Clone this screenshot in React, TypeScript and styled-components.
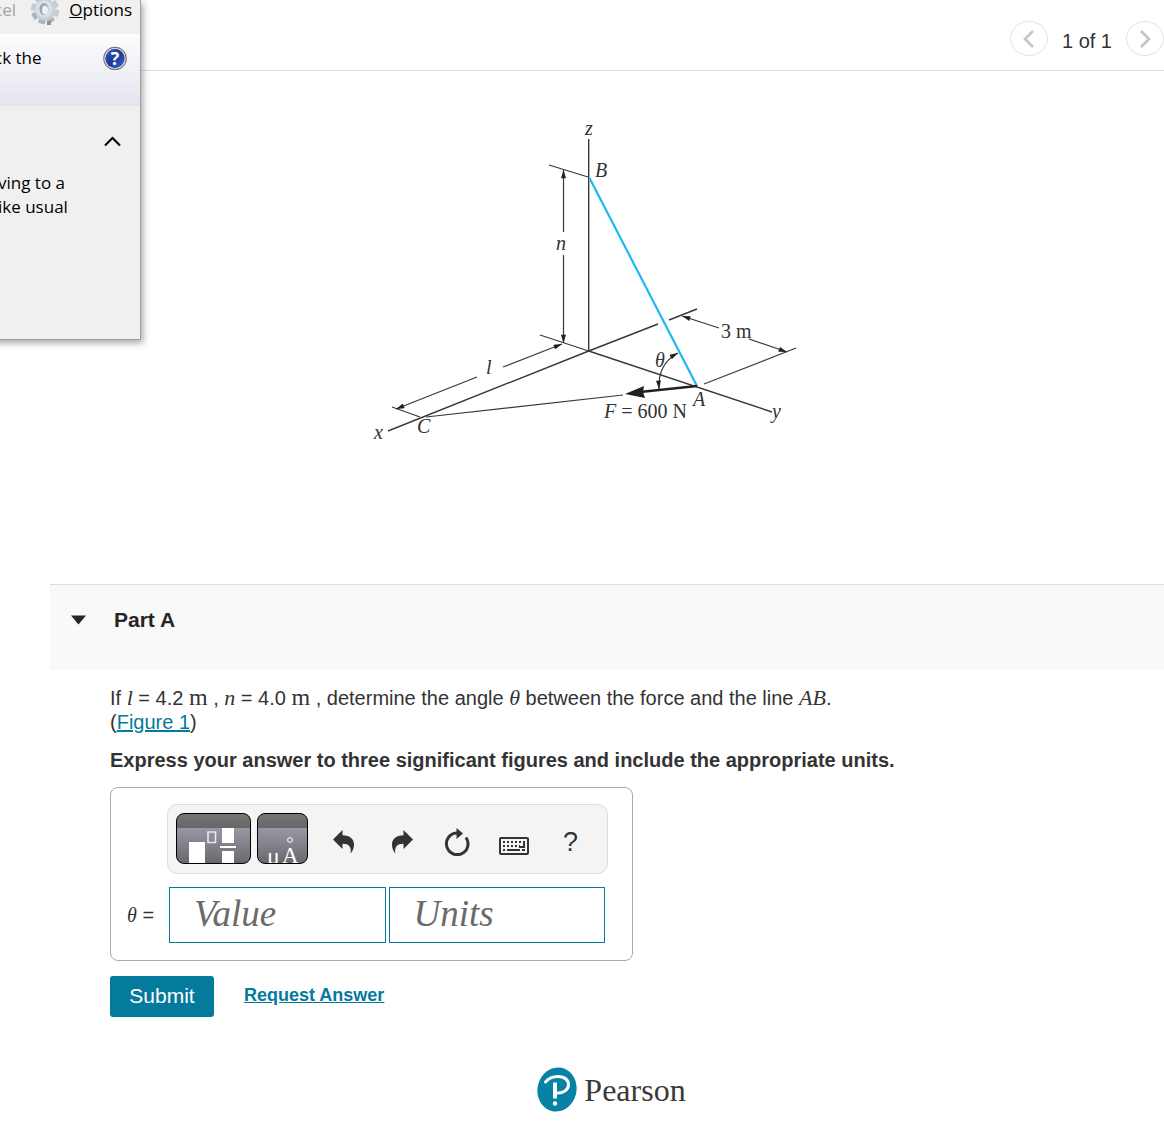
import React from 'react';
import styled, { createGlobalStyle } from 'styled-components';

const sans = '"Liberation Sans", Arial, sans-serif';
const serif = '"Liberation Serif", "Times New Roman", serif';
const teal = '#047a9c';

const GlobalStyle = createGlobalStyle`
  *, *::before, *::after { box-sizing: border-box; }
  body {
    margin: 0;
    background: #fff;
    color: #333;
    font: 20px/24px ${sans};
  }
`;

const Page = styled.div`
  position: relative;
  overflow: hidden;
`;

/* Desktop window lying over the page corner */
const Dialog = styled.aside`
  position: absolute;
  top: 0;
  left: -8px;
  width: 149px;
  height: 340px;
  background: #f0f0f0;
  border: 1px solid #a0a0a0;
  border-top: 0;
  box-shadow: 2px 3px 7px rgba(0, 0, 0, 0.35);
  color: #000;
  font: 17px/24px "Open Sans", "Noto Sans", sans-serif;
`;

const DialogBar = styled.div`
  display: flex;
  align-items: flex-start;
  justify-content: space-between;
  height: 34px;
  padding: 0 8px 0 1px;
  line-height: 20px;
`;

const Disabled = styled.span`
  color: #a3a3a3;
`;

const OptionsButton = styled.button`
  display: flex;
  gap: 8px;
  padding: 0;
  border: 0;
  background: none;
  color: inherit;
  font: inherit;
  line-height: 20px;
`;

const DialogBanner = styled.div`
  display: flex;
  align-items: flex-start;
  justify-content: space-between;
  height: 72px;
  padding: 12px 13px 0 1px;
  background: linear-gradient(#fdfdfe, #e4e4f0);
`;

const IconButton = styled.button`
  display: block;
  padding: 0;
  border: 0;
  background: none;

  svg { display: block; }
`;

const DialogBody = styled.div`
  display: flex;
  flex-direction: column;
  gap: 24px;
  padding: 30px 19px 0 5px;

  p { margin: 0; white-space: nowrap; }
  ${IconButton} { align-self: flex-end; }
`;

const Header = styled.header`
  display: flex;
  justify-content: flex-end;
  height: 71px;
  padding-top: 21px;
  border-bottom: 1px solid #ddd;
`;

const Pager = styled.nav`
  display: flex;
  align-items: flex-start;
  gap: 14px;
  line-height: 40px;
`;

const PageButton = styled.button`
  display: flex;
  align-items: center;
  justify-content: center;
  width: 38px;
  height: 35px;
  padding: 0;
  border: 1px solid #e4e4e4;
  border-radius: 50%;
  background: #fff;
`;

const Figure = styled.figure`
  display: flex;
  justify-content: center;
  min-height: 513px;
  margin: 0;
  padding-top: 39px;

  svg { display: block; }
`;

const Part = styled.section`
  margin-left: 50px;
`;

const PartHeader = styled.div`
  height: 86px;
  padding: 22px 20px;
  border-top: 1px solid #ddd;
  background: #f9f9f9;
`;

const PartToggle = styled.button`
  display: flex;
  align-items: center;
  gap: 27px;
  padding: 0;
  border: 0;
  background: none;
  color: #252525;
  font: bold 21px/26px ${sans};
`;

const PartBody = styled.div`
  padding: 16px 60px 0;
`;

const Question = styled.p`
  margin: 0 0 14px;
`;

const Link = styled.a<{ $strong?: boolean }>`
  color: ${teal};
  font-weight: ${(p) => (p.$strong ? 'bold' : 'normal')};
  font-size: ${(p) => (p.$strong ? '18px' : 'inherit')};
`;

const Instructions = styled.p`
  margin: 0 0 15px;
  font-weight: bold;
`;

const MathText = styled.span<{ $upright?: boolean }>`
  font-family: ${serif};
  font-size: ${(p) => (p.$upright ? 24 : 22)}px;
  line-height: 20px;
  font-style: ${(p) => (p.$upright ? 'normal' : 'italic')};
`;

const AnswerBox = styled.form`
  max-width: 523px;
  height: 174px;
  padding: 16px 24px 0 16px;
  border: 1px solid #aaa;
  border-radius: 8px;
`;

const Toolbar = styled.div`
  display: flex;
  align-items: flex-start;
  margin-left: 40px;
  height: 70px;
  padding: 8px;
  border: 1px solid #ddd;
  border-radius: 10px;
  background: #f4f4f4;
`;

const TemplateButton = styled.button<{ $width: number }>`
  flex: none;
  width: ${(p) => p.$width}px;
  height: 51px;
  margin-right: 6px;
  padding: 0;
  border: 1px solid #000;
  border-radius: 8px;
  overflow: hidden;
  background: linear-gradient(#777 0, #666 14px, #9a97a5 14px, #69696c 100%);

  svg { display: block; }
`;

const ToolButton = styled.button`
  display: flex;
  flex: 1;
  align-items: center;
  justify-content: center;
  height: 58px;
  padding: 0;
  border: 0;
  background: none;
  color: #333;
  font: 27px/32px ${sans};
`;

const AnswerRow = styled.div`
  display: flex;
  align-items: center;
  gap: 3px;
  margin-top: 13px;
  padding-right: 3px;
`;

const AnswerLabel = styled.label`
  flex: none;
  width: 39px;
  font: 20px/24px ${sans};

  em { font-family: ${serif}; }
`;

const AnswerInput = styled.input`
  flex: 1;
  min-width: 0;
  height: 56px;
  padding: 0 24px 4px;
  border: 1px solid ${teal};
  border-radius: 0;
  background: #fff;
  color: #333;
  font: italic 37px/48px ${serif};

  &::placeholder { color: #6a6a6a; opacity: 1; }
`;

const Actions = styled.div`
  display: flex;
  align-items: center;
  gap: 30px;
  margin-top: 15px;

  ${Link} { padding-bottom: 4px; }
`;

const SubmitButton = styled.button`
  width: 104px;
  height: 41px;
  padding: 0 0 2px;
  border: 0;
  border-radius: 3px;
  background: ${teal};
  color: #fff;
  font: 21px/24px ${sans};
`;

const Footer = styled.footer`
  display: flex;
  align-items: center;
  justify-content: center;
  gap: 7px;
  margin-top: 50px;
  padding: 0 0 14px 58px;
  color: #3c3a36;
  font: 32px/44px ${serif};
`;

const teeth = [0, 45, 90, 135, 180, 225, 270, 315];

const GearIcon = () => (
  <svg width="30" height="26" viewBox="0 0 30 26" aria-hidden="true">
    <g transform="translate(14 10)">
      {teeth.map((a) => (
        <rect key={a} x="-3.5" y="-14" width="7" height="8" rx="1" fill={a > 90 && a < 270 ? '#a9b4bc' : '#c3ccd3'} transform={`rotate(${a + 15})`} />
      ))}
      <circle r="10.500" fill="#c6d0d7" />
      <circle r="8.500" cx="-1" cy="-1" fill="#d9e1e6" />
      <ellipse rx="4.500" ry="6" cx="-1" cy="-1" fill="#98a5af" />
      <ellipse rx="3" ry="4.500" cx="0" cy="0" fill="#f0f0f0" />
      <rect x="2" y="11" width="4" height="4" fill="#87929a" />
    </g>
  </svg>
);

const HelpIcon = () => (
  <svg width="24" height="24" viewBox="0 0 24 24" aria-hidden="true">
    <defs>
      <linearGradient id="helpFill" x1="0" y1="0" x2="1" y2="1">
        <stop offset="0" stopColor="#3a5fc4" />
        <stop offset="0.5" stopColor="#1b3796" />
        <stop offset="1" stopColor="#3d6be0" />
      </linearGradient>
    </defs>
    <circle cx="12" cy="12.500" r="11.200" fill="#eee" stroke="#777" strokeWidth="1.200" />
    <circle cx="12" cy="12.500" r="9.700" fill="url(#helpFill)" />
    <text x="12" y="19" textAnchor="middle" fontFamily="Open Sans, sans-serif" fontWeight="bold" fontSize="18" fill="#fff">?</text>
  </svg>
);

const Chevron = ({ d }: { d: string }) => (
  <svg width="12" height="18" viewBox="0 0 12 18" fill="none" stroke="#c4c4c4" strokeWidth="2.6" aria-hidden="true">
    <path d={d} />
  </svg>
);

const UndoShape = 'M0 9.5L9.5 0V5.2C17 5.4 21 9 21 14.5C21 18.5 19.5 21.5 17.6 23.6C18.8 17 16 13.8 9.5 13.8V19Z';

const ForceDiagram = () => (
  <svg width="456" height="340" viewBox="-6 0 456 340" fill="none" stroke="#3a3838" strokeWidth="1.2" role="img" aria-label="Line AB and force F in x, y, z axes">
    <defs>
      <marker id="tip" viewBox="0 0 10 6" refX="10" refY="3" markerWidth="9" markerHeight="5" markerUnits="userSpaceOnUse" orient="auto-start-reverse">
        <path d="M0 0L10 3L0 6Z" fill="#231f20" stroke="none" />
      </marker>
    </defs>
    <path d="M228.700 29V241M28 321L228.700 241L298 214M309 210L337 199M228.700 241L412 302" strokeWidth="1.400" />
    <path d="M228.700 241L180 225M189 55L228 67M32 297L60 307M344 274L436 238M66 307L263 285" />
    <path d="M203.500 122V60" markerEnd="url(#tip)" />
    <path d="M203.500 145V233" markerEnd="url(#tip)" />
    <path d="M143 257L202 234" markerEnd="url(#tip)" />
    <path d="M117 267L36 299" markerEnd="url(#tip)" />
    <path d="M359 218L322 206" markerEnd="url(#tip)" />
    <path d="M389 229L427 242" markerEnd="url(#tip)" />
    <path d="M299 279C298 262 305 250 318 243" markerStart="url(#tip)" markerEnd="url(#tip)" />
    <path d="M229.500 68L337 276" stroke="#1fb8f0" strokeWidth="2.200" />
    <path d="M337 276L280 282" stroke="#231f20" strokeWidth="2.600" />
    <path d="M265 284L284 276L283 282L285 288Z" fill="#231f20" stroke="none" />
    <g fill="#333" stroke="none" fontFamily="Liberation Serif, serif" fontSize="20" fontStyle="italic">
      <text x="225" y="25">z</text>
      <text x="235" y="67">B</text>
      <text x="196" y="140">n</text>
      <text x="126" y="264">l</text>
      <text x="295" y="257">θ</text>
      <text x="333" y="296">A</text>
      <text x="412" y="308">y</text>
      <text x="14" y="329">x</text>
      <text x="57" y="323">C</text>
      <text x="244" y="308">F<tspan fontStyle="normal"> = 600 N</tspan></text>
      <text x="361" y="228" fontStyle="normal">3 m</text>
    </g>
  </svg>
);

export default function App() {
  return (
    <Page>
      <GlobalStyle />
      <Header>
        <Pager aria-label="Figures">
          <PageButton aria-label="Previous figure"><Chevron d="M10 1L2 9L10 17" /></PageButton>
          <span>1 of 1</span>
          <PageButton aria-label="Next figure"><Chevron d="M2 1L10 9L2 17" /></PageButton>
        </Pager>
      </Header>

      <Figure id="figure-1"><ForceDiagram /></Figure>

      <Part>
        <PartHeader>
          <PartToggle aria-expanded="true">
            <svg width="17" height="10" viewBox="0 0 17 10" aria-hidden="true"><path d="M1 0.500H16L8.500 9.500Z" fill="#252525" /></svg>
            Part A
          </PartToggle>
        </PartHeader>
        <PartBody>
          <Question>
            If <MathText>l</MathText> = 4.2 <MathText $upright>m</MathText> , <MathText>n</MathText> = 4.0 <MathText $upright>m</MathText> , determine the angle <MathText>θ</MathText> between the force and the line <MathText>AB</MathText>.
            <br />
            (<Link href="#figure-1">Figure 1</Link>)
          </Question>
          <Instructions>Express your answer to three significant figures and include the appropriate units.</Instructions>

          <AnswerBox id="answer" onSubmit={(e) => e.preventDefault()}>
            <Toolbar role="toolbar" aria-label="Equation tools">
              <TemplateButton type="button" $width={75} aria-label="Templates">
                <svg width="73" height="49" viewBox="0 0 73 49" aria-hidden="true">
                  <path d="M12 28H28V49H12ZM45 14H57V29H45ZM43 32H59V34H43ZM45 37H57V49H45Z" fill="#fff" />
                  <path d="M31 18H38.500V28.500H31Z" fill="none" stroke="#e8e8ec" strokeWidth="1.600" />
                </svg>
              </TemplateButton>
              <TemplateButton type="button" $width={51} aria-label="Units symbols">
                <svg width="49" height="49" viewBox="0 0 49 49" fill="#fff" fontFamily="Liberation Serif, serif" aria-hidden="true">
                  <text x="9" y="50" fontSize="24">μ</text>
                  <text x="24" y="49" fontSize="23">A</text>
                  <circle cx="32" cy="26" r="2.400" fill="none" stroke="#fff" />
                </svg>
              </TemplateButton>
              <ToolButton type="button" aria-label="Undo">
                <svg width="23" height="24" viewBox="-2 0 23 24" fill="currentColor"><path d={UndoShape} /></svg>
              </ToolButton>
              <ToolButton type="button" aria-label="Redo">
                <svg width="27" height="24" viewBox="-6 0 27 24" fill="currentColor"><path d={UndoShape} transform="translate(21 0) scale(-1 1)" /></svg>
              </ToolButton>
              <ToolButton type="button" aria-label="Reset">
                <svg width="26" height="28" viewBox="0 0 26 28" fill="none" stroke="currentColor" strokeWidth="3">
                  <path d="M14 5H12.500A10.800 10.800 0 1 0 22 9.500" />
                  <path d="M12.500 0L19 5.500L12.500 11Z" fill="currentColor" stroke="none" />
                </svg>
              </ToolButton>
              <ToolButton type="button" aria-label="Keyboard shortcuts">
                <svg width="30" height="26" viewBox="0 0 30 26" fill="none" stroke="currentColor">
                  <rect x="1" y="9" width="28" height="16" rx="1" strokeWidth="2" />
                  <path d="M4 13H23M4 17H21" strokeWidth="2" strokeDasharray="2 2" />
                  <path d="M4 21H6M8 21H21M23 21H26M25 12V18H20" strokeWidth="2" />
                </svg>
              </ToolButton>
              <ToolButton type="button" aria-label="Help">?</ToolButton>
            </Toolbar>
            <AnswerRow>
              <AnswerLabel htmlFor="value"><em>θ</em> =</AnswerLabel>
              <AnswerInput id="value" placeholder="Value" />
              <AnswerInput id="units" aria-label="Units" placeholder="Units" />
            </AnswerRow>
          </AnswerBox>

          <Actions>
            <SubmitButton type="submit" form="answer">Submit</SubmitButton>
            <Link $strong href="#answer">Request Answer</Link>
          </Actions>
        </PartBody>
      </Part>

      <Footer>
        <svg width="41" height="46" viewBox="0 0 41 46" fill="none" stroke="#fff" strokeLinecap="round" aria-hidden="true">
          <ellipse cx="21" cy="22.500" rx="19.500" ry="22.200" fill="#0582a5" stroke="none" transform="rotate(12 21 22.500)" />
          <path d="M9.500 15C13 10.500 18 9.500 22 9.500C29 9.500 32.500 13.500 32.500 17.500C32.500 22.500 28 26 22 26" strokeWidth="3" />
          <path d="M19 15.500V31.500" strokeWidth="4" strokeLinecap="butt" />
          <circle cx="19" cy="36.500" r="2.200" fill="#fff" stroke="none" />
        </svg>
        <span>Pearson</span>
      </Footer>

      <Dialog>
        <DialogBar>
          <Disabled>cel</Disabled>
          <OptionsButton><GearIcon /><span><u>O</u>ptions</span></OptionsButton>
        </DialogBar>
        <DialogBanner>
          <span>ck the</span>
          <IconButton aria-label="Help"><HelpIcon /></IconButton>
        </DialogBanner>
        <DialogBody>
          <IconButton aria-label="Collapse">
            <svg width="17" height="11" viewBox="0 0 17 11" fill="none" stroke="#000" strokeWidth="2"><path d="M1 9.500L8.500 2L16 9.500" /></svg>
          </IconButton>
          <p>ving to a<br />ike usual</p>
        </DialogBody>
      </Dialog>
    </Page>
  );
}
